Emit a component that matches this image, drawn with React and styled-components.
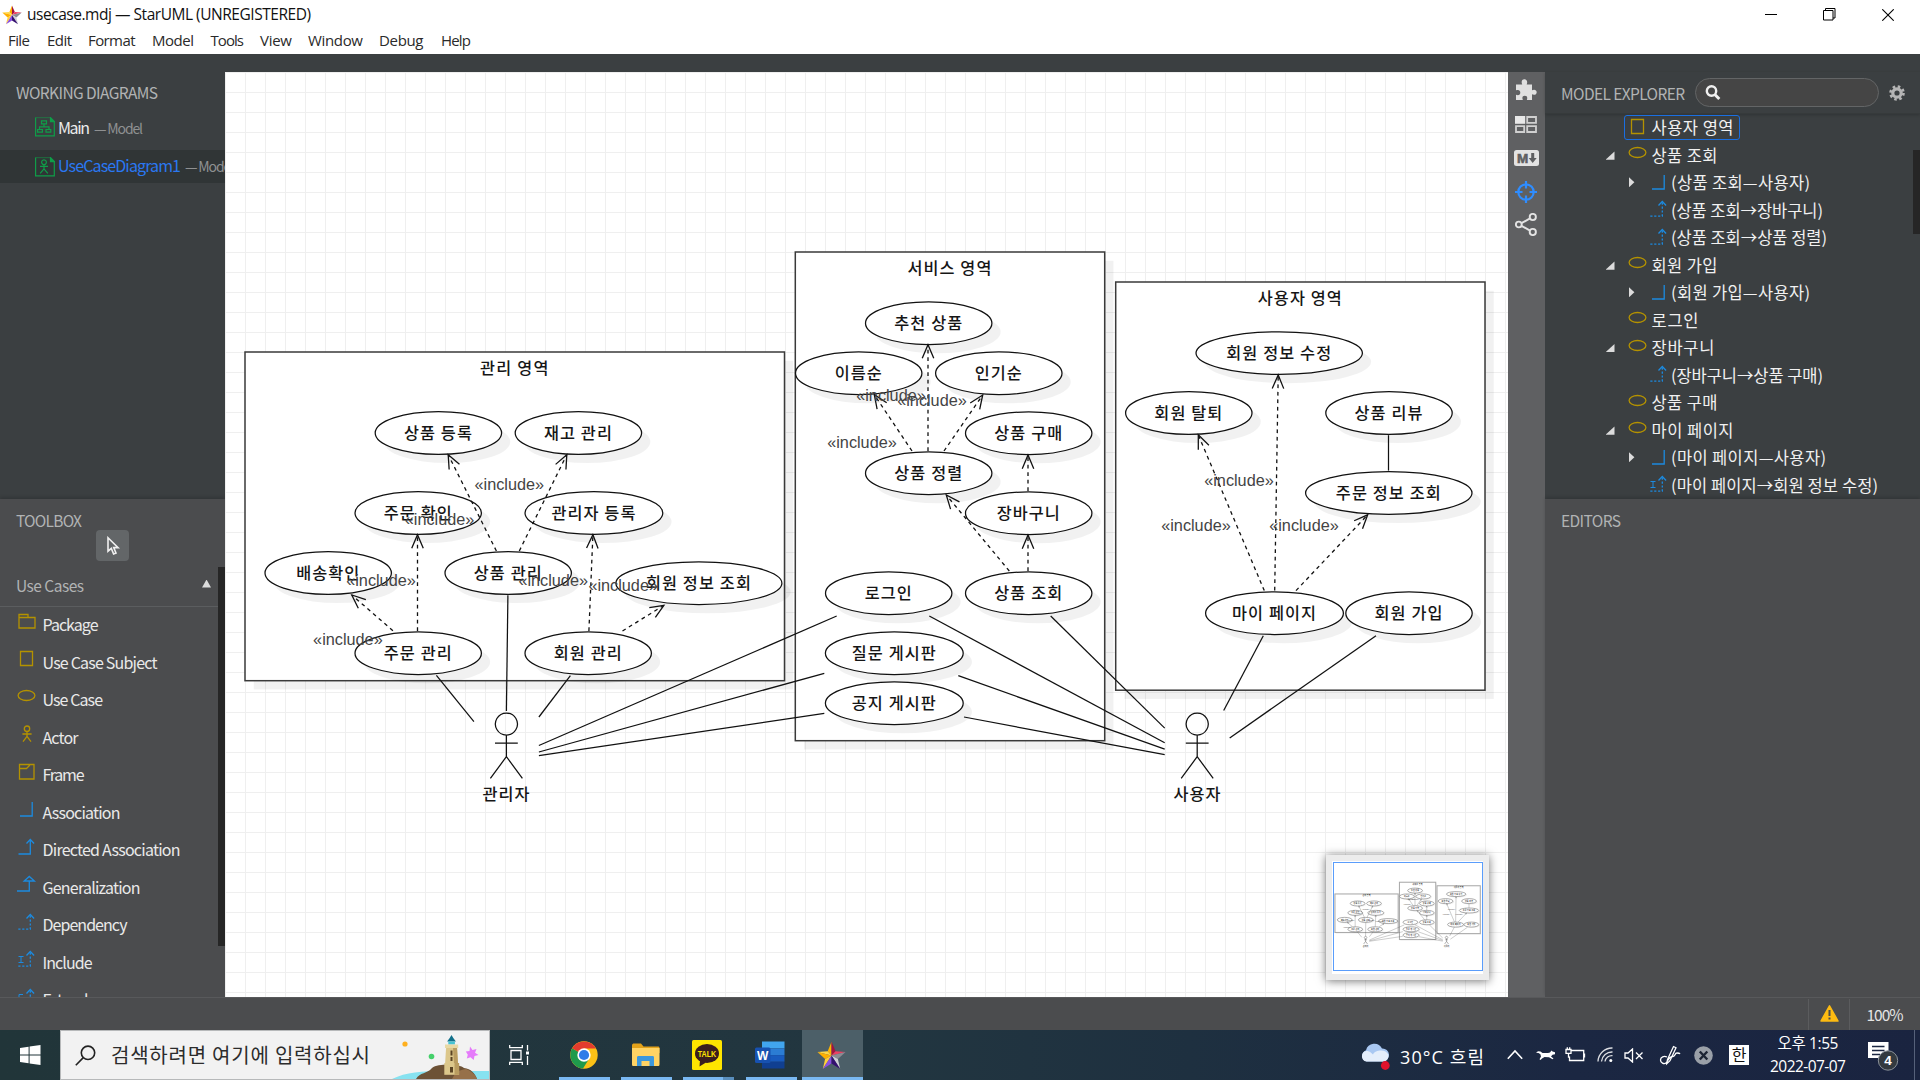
import React, { useLayoutEffect, useRef } from "react";
import styled, { createGlobalStyle, css } from "styled-components";

const KR = `"Noto Sans CJK KR", "Noto Sans", sans-serif`;
const UI = `"Open Sans", "Noto Sans CJK KR", sans-serif`;

const Global = createGlobalStyle`
  * { box-sizing: border-box; }
  html, body { margin: 0; padding: 0; overflow: hidden; }
  body { font-family: ${KR}; background: #3b3f41; }
  svg { display: block; flex: none; }
`;

/* ---------- text that keeps a fixed advance width ---------- */

const FitSpan = styled.span`
  display: inline-block;
  white-space: pre;
  flex: none;
`;

function Fit({ w, children, className }) {
  const ref = useRef(null);
  useLayoutEffect(() => {
    const el = ref.current;
    el.style.letterSpacing = "0px";
    const natural = el.getBoundingClientRect().width;
    const count = Array.from(el.textContent).length;
    const gap = (w - natural) / Math.max(1, count - 1);
    el.style.letterSpacing = `${gap}px`;
    el.style.marginRight = `${-gap}px`;
  }, [w, children]);
  return <FitSpan ref={ref} className={className}>{children}</FitSpan>;
}

/* ---------- frame ---------- */

const Screen = styled.div`
  width: 1920px;
  height: 1080px;
  display: flex;
  flex-direction: column;
  overflow: hidden;
`;

const TitleBar = styled.header`
  height: 29px;
  background: #fff;
  display: flex;
  align-items: center;
  padding-left: 2px;
  gap: 5px;
  font: 400 15.5px/29px ${UI};
  color: #111;
`;

const WindowButtons = styled.div`
  margin-left: auto;
  display: flex;
  align-items: center;
  gap: 46px;
  padding-right: 26px;
`;

const MenuBar = styled.nav`
  height: 25px;
  background: #fff;
  display: flex;
  align-items: flex-start;
  padding: 0 0 0 8px;
  font: 400 15px/23px ${UI};
  color: #2a2a2a;
`;

const MenuItem = styled.span`
  display: block;
  flex: none;
  width: ${(p) => p.$slot}px;
`;

const Strip = styled.div`
  height: 18px;
  background: #3b3f41;
`;

const Workspace = styled.div`
  display: flex;
  height: 925px;
`;

const LeftColumn = styled.aside`
  width: 225px;
  display: flex;
  flex-direction: column;
  background: #3b3f41;
  overflow: hidden;
`;

const PanelTitle = styled.div`
  font-size: 15.5px;
  line-height: 24px;
  color: #b1b3b4;
  padding-left: 16px;
`;

const Working = styled.section`
  height: 427px;
  flex: none;
  padding-top: 8px;
`;

const DiagramRow = styled.div`
  height: ${(p) => p.$h}px;
  display: flex;
  align-items: center;
  gap: 3px;
  padding: 0 0 ${(p) => (p.$active ? 3 : 0)}px 35px;
  background: ${(p) => (p.$active ? "#303536" : "transparent")};
  color: ${(p) => (p.$active ? "#2a78f2" : "#ececec")};
  font-size: 16px;
  overflow: hidden;
  line-height: 24px;
`;

const DocSlot = styled.span`
  padding-top: ${(p) => (p.$active ? 3 : 0)}px;
`;

const Owner = styled.span`
  color: #8f9192;
  font-size: 14px;
  padding-left: 1px;
  padding-top: 1px;
`;

const Toolbox = styled.section`
  flex: 1;
  min-height: 0;
  background: #4b4c4e;
  box-shadow: 0 -2px 3px rgba(0, 0, 0, 0.15);
  padding-top: 9px;
  display: flex;
  flex-direction: column;
`;

const ToolButton = styled.div`
  width: 33px;
  height: 31px;
  margin: -2px 0 4px 96px;
  padding-left: 2px;
  border-radius: 4px;
  background: #636668;
  display: flex;
  align-items: center;
  justify-content: center;
  flex: none;
`;

const ToolScroll = styled.div`
  display: flex;
  flex: 1;
  min-height: 0;
`;

const ToolList = styled.div`
  width: 218px;
  overflow: hidden;
`;

const ScrollThumb = styled.div`
  width: 7px;
  height: ${(p) => p.$h}px;
  margin-top: ${(p) => p.$top}px;
  background: #262626;
`;

const GroupHead = styled.div`
  height: 42px;
  display: flex;
  align-items: center;
  justify-content: space-between;
  padding: 0 7px 1px 16px;
  border-bottom: 1px solid #5b5d5f;
  color: #b1b3b4;
  font-size: 15.5px;
`;

const Up = styled.i`
  width: 9px;
  height: 8px;
  margin-bottom: 3px;
  background: #dcdcdc;
  clip-path: polygon(50% 0, 100% 100%, 0 100%);
`;

const ToolRow = styled.div`
  height: 37.5px;
  display: flex;
  align-items: center;
  gap: 6px;
  padding: 0 0 3px 16.5px;
  color: #e9e9e9;
  font-size: 16px;
`;

const ToolIcon = styled.span`
  width: 20px;
  height: 18px;
  margin-top: -5px;
`;

/* ---------- canvas ---------- */

const CanvasArea = styled.main`
  width: 1283px;
  position: relative;
  overflow: hidden;
  background-color: #fff;
  background-image: linear-gradient(#efefef 1px, transparent 1px),
    linear-gradient(90deg, #efefef 1px, transparent 1px);
  background-size: 20px 20px;
`;

const MiniMap = styled.div`
  position: absolute;
  left: 1101px;
  top: 783px;
  width: 163px;
  height: 125px;
  padding: 6px;
  background: #ececec;
  box-shadow: 0 1px 9px rgba(0, 0, 0, 0.55);
`;

const MiniPaper = styled.div`
  height: 113px;
  background: #fff;
  padding: 1px 0 0 1px;
`;

const MiniView = styled.div`
  height: 109px;
  border: 1.5px solid #5a9dfb;
`;

/* ---------- right side ---------- */

const IconRail = styled.div`
  width: 37px;
  background: #5f6062;
  display: flex;
  flex-direction: column;
  align-items: center;
  padding: 7px 1px 0 0;
`;

const RailSlot = styled.div`
  height: ${(p) => p.$h}px;
  display: flex;
  align-items: flex-start;
`;

const RightColumn = styled.aside`
  width: 375px;
  display: flex;
  flex-direction: column;
  background: #3b3f41;
`;

const ExplorerHead = styled.div`
  height: 42px;
  flex: none;
  display: flex;
  align-items: center;
  padding: 0 15px 0 16px;
  color: #b1b3b4;
  font-size: 15.5px;
  border-bottom: 1px solid #363a3b;
  box-shadow: 0 1px 3px rgba(0, 0, 0, 0.2);
`;

const SearchPill = styled.div`
  width: 184px;
  height: 29px;
  margin: 0 10px 0 auto;
  border: 1px solid #636566;
  border-radius: 15px;
  background: #454545;
  display: flex;
  align-items: center;
  padding-left: 9px;
`;

const TreeArea = styled.div`
  height: 385px;
  flex: none;
  display: flex;
  justify-content: space-between;
  overflow: hidden;
`;

const Tree = styled.div`
  margin-top: -0.5px;
`;

const TreeRow = styled.div`
  height: 27.5px;
  display: flex;
  align-items: center;
  padding-left: ${(p) => (p.$level === 2 ? 84 : 60.5)}px;
  color: #f1f1f1;
  font-size: 16.5px;
  line-height: 24px;
`;

const Expander = styled.i`
  width: 9px;
  height: 10px;
  margin-right: ${(p) => (p.$level === 2 ? 6.5 : 9)}px;
  background: ${(p) => (p.$state ? "#dcdcdc" : "transparent")};
  ${(p) => p.$state === "open" && css`clip-path: polygon(100% 18%, 100% 100%, 0 100%);`}
  ${(p) => p.$state === "closed" && css`clip-path: polygon(0 0, 60% 50%, 0 100%);`}
`;

const NodeBox = styled.div`
  display: flex;
  align-items: center;
  gap: ${(p) => (p.$level === 2 ? 3.5 : 5)}px;
  height: 25px;
  padding: 0 5px 0 3px;
  border: 1px solid ${(p) => (p.$selected ? "#1a6fe2" : "transparent")};
  border-radius: 3px;
`;

const NodeIcon = styled.span`
  width: 20px;
  height: 18px;
  margin-right: -1px;
  margin-top: -1px;
`;

const Editors = styled.section`
  flex: 1;
  background: #4b4c4e;
  padding-top: 9px;
  box-shadow: 0 -2px 3px rgba(0, 0, 0, 0.15);
`;

/* ---------- status bar ---------- */

const StatusBar = styled.footer`
  height: 33px;
  background: #4b4c4e;
  border-top: 1px solid #58595b;
  display: flex;
  justify-content: flex-end;
  padding-top: 1px;
`;

const StatusCell = styled.div`
  width: ${(p) => p.$w}px;
  border-left: 1px solid #5b5c5e;
  display: flex;
  align-items: center;
  justify-content: center;
  padding-bottom: 2px;
  color: #e4e4e4;
  font-size: 15.5px;
`;

/* ---------- taskbar ---------- */

const Taskbar = styled.div`
  height: 50px;
  display: flex;
  background: linear-gradient(90deg, #213539 0%, #223640 45%, #1e3040 62%, #1b2742 82%, #1a2440 100%);
`;

const StartButton = styled.div`
  width: 60px;
  display: flex;
  align-items: center;
  justify-content: center;
`;

const SearchBox = styled.div`
  width: 430px;
  height: 50px;
  border: 1px solid #b7b9ba;
  background: #f2f2f2;
  display: flex;
  align-items: center;
  padding-left: 14px;
  font: 400 20px/45px ${KR};
  color: #2c2c2c;
`;

const SearchLabel = styled.span`
  margin: -2px auto 0 15px;
`;

const TaskViewSlot = styled.div`
  width: 62px;
  display: flex;
  align-items: center;
  padding-left: 19px;
`;

const AppSlot = styled.div`
  width: ${(p) => p.$w}px;
  display: flex;
  flex-direction: column;
  align-items: center;
  background: ${(p) => (p.$active ? "#4c5f68" : "transparent")};
`;

const AppIcon = styled.div`
  flex: 1;
  display: flex;
  align-items: center;
  padding: 3px ${(p) => p.$nudge || 0}px 0 0;
`;

const AppLine = styled.div`
  height: 3px;
  width: ${(p) => p.$w}px;
  background: ${(p) => (p.$split ? "linear-gradient(90deg,#79b8f2 78%,#5a8fbd 78%)" : "#79b8f2")};
`;

const Tray = styled.div`
  width: 560px;
  margin-left: auto;
  display: flex;
  align-items: center;
  color: #fff;
`;

const TrayItem = styled.div`
  width: ${(p) => p.$w}px;
  flex: none;
  display: flex;
  padding-top: ${(p) => p.$down || 0}px;
`;

const Weather = styled.div`
  width: 107px;
  flex: none;
  font: 400 18px/26px ${UI};
  padding-top: 3px;
`;

const Clock = styled.div`
  width: 106px;
  flex: none;
  display: flex;
  flex-direction: column;
  align-items: center;
  font: 400 15.5px/23.5px ${UI};
  padding: 0 14px 0 0;
`;

/* ---------- small drawings ---------- */

const Star = ({ size }) => (
  <svg width={size} height={size} viewBox="0 0 20 20">
    <path d="M10 10 10 .5 7.4 7z" fill="#ffb400" />
    <path d="M10 .5 10 10 12.8 7z" fill="#a3123f" />
    <path d="M.3 7.6 7.4 7 10 10z" fill="#ffd84a" />
    <path d="M.3 7.6 10 10 5.6 12.4z" fill="#ffb000" />
    <path d="M19.7 7.6 12.8 7 10 10z" fill="#ef3f62" />
    <path d="M19.7 7.6 10 10 14.4 12.4z" fill="#8b8b93" />
    <path d="M4 19.3 5.6 12.4 10 10z" fill="#ffcf3a" />
    <path d="M4 19.3 10 10 10 15.6z" fill="#8a4fe0" />
    <path d="M16 19.3 14.4 12.4 10 10z" fill="#cfcfd6" />
    <path d="M16 19.3 10 10 10 15.6z" fill="#34106f" />
  </svg>
);

const Gold = "#b49200";
const Blue = "#1c8be0";

const glyphs = {
  package: <path d="M2 1.5h9v3H2zM2 4.5h16v10.5H2z" stroke={Gold} />,
  subject: <path d="M3.5 1.5h12v14h-12z" stroke={Gold} />,
  usecase: <ellipse cx="9.5" cy="7.5" rx="8.4" ry="5" stroke={Gold} />,
  actor: (
    <g stroke={Gold}>
      <circle cx="10" cy="3.7" r="2.7" />
      <path d="M10 6.4v5.2M5.4 9h9.2M10 11.4l-4 5.2M10 11.4l4 5.2" />
    </g>
  ),
  frame: <path d="M2.5 1.5H17v14.5H2.5zM2.5 5.5h7l3-3V1.5" stroke={Gold} />,
  association: <path d="M3 16h12.2V2" stroke={Blue} />,
  directed: <path d="M1.5 16H13.3V1.5M9.5 5.5l3.8-4 3.8 4" stroke={Blue} />,
  generalization: <path d="M0 16H12.3V6M7.2 6l5.1-4.6L17.4 6z" stroke={Blue} />,
  dependency: (
    <g stroke={Blue}>
      <path d="M1.3 16.2H13.3V2" strokeDasharray="2.2 1.7" />
      <path d="M9.5 5.5l3.8-4 3.8 4" />
    </g>
  ),
  include: (
    <g stroke={Blue}>
      <path d="M1.3 16.2H13.3V2" strokeDasharray="2.2 1.7" />
      <path d="M9.5 5.5l3.8-4 3.8 4" />
      <path d="M1.5 6.5h5M4 6.5v6M1.5 12.500h5" strokeWidth="1" />
    </g>
  ),
  extend: (
    <g stroke={Blue}>
      <path d="M1.3 16.2H13.3V2" strokeDasharray="2.2 1.7" />
      <path d="M9.5 5.5l3.8-4 3.8 4" />
      <path d="M6 6.500H2v6h4M2 9.500h3" strokeWidth="1" />
    </g>
  ),
};

const Glyph = ({ kind }) => (
  <svg width="20" height="18" viewBox="0 0 20 18" fill="none" strokeWidth="1.3">{glyphs[kind]}</svg>
);

const DocIcon = ({ kind }) => (
  <svg width="20" height="20" viewBox="0 0 20 20" fill="none" stroke="#0f9d48" strokeWidth="1.2">
    <path d="M.6.6V18.9H19.3V4.5" />
    <path d="M.6.6H15" strokeOpacity=".45" />
    <path d="M15.5.6v4h4zM19.3 4.5 15.5.6" fill="#0f9d48" />
    {kind === "class" ? (
      <path d="M6.5 3.8h5v3h-5zM9 6.8v3M4.5 12.4V9.8h9.5v2.6M2.6 12.5h4.8v2.6H2.6zM11 12.5h4.8v2.6H11z" />
    ) : (
      <path d="M9 2.8a2.4 2.4 0 1 0 .01 0zM9 7.6v4.2M5 9.3h8M9 11.8l-3.8 4.5M9 11.8l3.8 4.5" />
    )}
  </svg>
);

/* ---------- diagram ---------- */

const subjects = [
  { x: 245, y: 352, r: 784.5, b: 680.7, label: "관리 영역", w: 68.5, tx: 514.3, ty: 367.5 },
  { x: 795.3, y: 252, r: 1104.7, b: 740.7, label: "서비스 영역", w: 84, tx: 949.4, ty: 267.5 },
  { x: 1115.7, y: 282, r: 1485, b: 690.2, label: "사용자 영역", w: 84, tx: 1299.8, ty: 297.7 },
];

const cases = [
  ["상품 등록", 438.4, 433, 63.5, 68],
  ["재고 관리", 578.4, 433, 63.5, 68],
  ["주문 확인", 418.2, 513, 63.5, 68],
  ["관리자 등록", 593.9, 513, 69.2, 84],
  ["배송확인", 328.2, 573, 63.5, 63],
  ["상품 관리", 508.2, 573, 63.5, 68],
  ["회원 정보 조회", 698.9, 583.2, 83.3, 105],
  ["주문 관리", 418.2, 653.2, 63.5, 68],
  ["회원 관리", 588.2, 653.2, 63.5, 68],
  ["추천 상품", 928.7, 323.2, 63.5, 68],
  ["이름순", 858.7, 373.2, 63.5, 47],
  ["인기순", 998.8, 373.2, 63.5, 47],
  ["상품 구매", 1028.7, 433.2, 63.5, 68],
  ["상품 정렬", 928.7, 473.2, 63.5, 68],
  ["장바구니", 1028.7, 513.2, 63.5, 63],
  ["로그인", 888.7, 593.2, 63.5, 47],
  ["상품 조회", 1028.7, 593.2, 63.5, 68],
  ["질문 게시판", 894.3, 653.2, 69.2, 84],
  ["공지 게시판", 894.3, 703.2, 69.2, 84],
  ["회원 정보 수정", 1279.2, 353.1, 83.5, 105],
  ["회원 탈퇴", 1188.8, 413, 63.5, 68],
  ["상품 리뷰", 1389, 413, 63.5, 68],
  ["주문 정보 조회", 1388.8, 493, 83.5, 105],
  ["마이 페이지", 1274.5, 613.2, 69.2, 84],
  ["회원 가입", 1409, 613.2, 63.5, 68],
];

const dashed = [
  [496.4, 551, 448.2, 454.7],
  [519.3, 551, 566.8, 454.7],
  [417.5, 631, 417.5, 534.7],
  [392.9, 630.7, 351.8, 595],
  [588.9, 631, 592.9, 534.7],
  [622.5, 631, 663.9, 605.3],
  [912, 451, 874.3, 394.7],
  [928, 451, 928, 344.7],
  [944, 451, 982.7, 395],
  [1028, 491, 1028, 455],
  [1028, 571, 1028, 535],
  [1009.3, 571, 946.3, 495],
  [1264.3, 590.6, 1198.3, 434.9],
  [1274.7, 590.6, 1278.2, 374.9],
  [1296, 590.6, 1367.7, 514.8],
];

const solid = [
  [507.9, 595.3, 506.4, 711],
  [436.4, 675.3, 473.9, 721.7],
  [570.4, 675.7, 538.9, 717],
  [538.9, 745.5, 836.7, 616],
  [538.9, 752, 824.3, 673.3],
  [538.9, 755.7, 824.3, 713.3],
  [929.3, 616, 1164.7, 742.8],
  [1050.7, 616, 1164.7, 728.1],
  [958.3, 675.7, 1164.7, 749.1],
  [964, 717, 1164.7, 754.7],
  [1263.3, 635.8, 1223.7, 710.5],
  [1376, 635.8, 1229.7, 737.9],
  [1388.5, 435.2, 1388.5, 470.6],
];

const includes = [
  [509.3, 484.5], [439.6, 519], [381, 580.8], [553.2, 580], [623.2, 585], [347.9, 639.8],
  [891, 395.7], [932, 400.8], [862, 442.8],
  [1239, 480.6], [1196, 525.8], [1304, 525.8],
];

const actors = [
  [506.4, "관리자", 794.3],
  [1197.2, "사용자", 794.3],
];

const Name = styled.text`
  font: 500 16.3px ${KR};
  fill: #161616;
  text-anchor: middle;
`;

const Stereo = styled.text`
  font: 16.25px "Liberation Sans", sans-serif;
  fill: #444;
  text-anchor: middle;
`;

function arrowHead([x1, y1, x2, y2]) {
  const a = Math.atan2(y2 - y1, x2 - x1);
  const at = (s) => {
    const t = a + Math.PI + s * 0.4;
    return `${x2 + 14.8 * Math.cos(t)} ${y2 + 14.8 * Math.sin(t)}`;
  };
  return `M${at(1)}L${x2} ${y2}L${at(-1)}`;
}

const Drawing = ({ mini }) => (
  <svg
    width={mini ? 147 : 1283}
    height={mini ? 106 : 925}
    viewBox={mini ? "237 90 1254 900" : "225 72 1283 925"}
    fill="none"
    stroke={mini ? "#555" : "#111"}
    strokeWidth={mini ? 4 : 1.25}
  >
    {subjects.map((s) => (
      <g key={s.label}>
        <rect x={s.x + 8.75} y={s.y + 8.75} width={s.r - s.x} height={s.b - s.y} fill="#000" fillOpacity=".055" stroke="none" />
        <rect x={s.x} y={s.y} width={s.r - s.x} height={s.b - s.y} fill="#fff" stroke={mini ? "#aaa" : "#3a3a3a"} strokeWidth={mini ? 9 : 1.5} />
      </g>
    ))}
    {cases.map(([label, cx, cy, rx]) => (
      <g key={label}>
        <ellipse cx={cx + 8.75} cy={cy + 8.75} rx={rx - 0.3} ry="21.3" fill="#000" fillOpacity=".055" stroke="none" />
        <ellipse cx={cx} cy={cy} rx={rx - 0.3} ry="21.3" fill="#fff" />
      </g>
    ))}
    {dashed.map((l, i) => (
      <g key={i}>
        <line x1={l[0]} y1={l[1]} x2={l[2]} y2={l[3]} strokeDasharray={mini ? "none" : "3.75 3.75"} strokeWidth={mini ? 2.5 : 1.3} />
        <path d={arrowHead(l)} strokeWidth={mini ? 2.5 : 1.3} />
      </g>
    ))}
    {solid.map((l, i) => (
      <line key={i} x1={l[0]} y1={l[1]} x2={l[2]} y2={l[3]} strokeWidth={mini ? 2.5 : 1.25} />
    ))}
    {actors.map(([x, label]) => (
      <path
        key={label}
        d={`M${x} 713a11 11 0 1 0 .01 0zM${x} 735V756.7M${x - 11.4} 743h22.8M${x} 756.7L${x - 16} 778.3M${x} 756.7L${x + 16} 778.3`}
      />
    ))}
    <g stroke="none">
      {subjects.map((s) => (
        <Name key={s.label} x={s.tx} y={s.ty + 6} textLength={s.w}>{s.label}</Name>
      ))}
      {cases.map(([label, cx, cy, , w]) => (
        <Name key={label} x={cx - 0.5} y={cy + 5.5} textLength={w}>{label}</Name>
      ))}
      {actors.map(([x, label, y]) => (
        <Name key={label} x={x - 0.3} y={y + 6} textLength={47}>{label}</Name>
      ))}
      {includes.map(([x, y], i) => (
        <Stereo key={i} x={x} y={y + 5.5}>«include»</Stereo>
      ))}
    </g>
  </svg>
);

/* ---------- rail icons ---------- */

const Rail = () => (
  <IconRail>
    <RailSlot $h={37}>
      <svg width="22" height="22" viewBox="0 0 22 22" fill="#e0e0e0">
        <path d="M1 5.5h6.2C6 3 6.8.3 9.4.3S12.8 3 11.7 5.5H17v5.700c2.300-1.200 4.700-.3 4.700 2s-2.400 3.200-4.700 2.100V21H11.800c1-2.400.3-4.200-2-4.200S6.800 18.600 7.900 21H1v-5.200c2.600.9 4.300.1 4.300-2.300S3.500 10.300 1 11.300z" />
      </svg>
    </RailSlot>
    <RailSlot $h={34}>
      <svg width="22" height="17" viewBox="0 0 22 17">
        <path d="M0 0h10.2v7.8H0z" fill="#e8e8e8" />
        <path d="M12.2 1h8.8v5.800h-8.800zM1 10.200h8.200V16H1zM12.200 10.200h8.800V16h-8.800z" fill="#5f6062" stroke="#d0d0d0" strokeWidth="1.8" />
      </svg>
    </RailSlot>
    <RailSlot $h={31}>
      <svg width="25" height="16" viewBox="0 0 25 16">
        <rect width="25" height="16" rx="2.5" fill="#e3e3e3" />
        <text x="8.5" y="12.6" textAnchor="middle" fontFamily="Liberation Sans" fontWeight="700" fontSize="13.5" fill="#5f6062" stroke="#5f6062" strokeWidth=".6">M</text>
        <path d="M17.2 3h3v5h2.5l-4 5-4-5h2.5z" fill="#5f6062" />
      </svg>
    </RailSlot>
    <RailSlot $h={32}>
      <svg width="22" height="22" viewBox="0 0 22 22" fill="none" stroke="#2f8dff" strokeWidth="2.2">
        <circle cx="11" cy="11" r="7.7" />
        <path d="M11 0v7.5M11 14.5V22M0 11h7.5M14.5 11H22" />
      </svg>
    </RailSlot>
    <RailSlot $h={30}>
      <svg width="22" height="23" viewBox="0 0 22 23" fill="none" stroke="#e3e3e3" strokeWidth="1.9">
        <circle cx="3.8" cy="11.5" r="2.9" />
        <circle cx="17.8" cy="4" r="3.1" />
        <circle cx="17.8" cy="19" r="3.1" />
        <path d="M6.5 10.2 15 5.4M6.5 12.8 15 17.6" />
      </svg>
    </RailSlot>
  </IconRail>
);

/* ---------- data ---------- */

const menus = [
  ["File", 39, 22], ["Edit", 41, 25], ["Format", 64, 47.5], ["Model", 58.5, 42], ["Tools", 49.5, 33.5],
  ["View", 48, 32], ["Window", 71, 55], ["Debug", 62, 44.5], ["Help", 40, 30],
];

const tools = [
  ["package", "Package", 56], ["subject", "Use Case Subject", 115], ["usecase", "Use Case", 60.5],
  ["actor", "Actor", 36], ["frame", "Frame", 42], ["association", "Association", 78],
  ["directed", "Directed Association", 138], ["generalization", "Generalization", 98],
  ["dependency", "Dependency", 85], ["include", "Include", 50], ["extend", "Extend", 46],
];

const nodes = [
  [1, "", "subject", "사용자 영역", 82, true],
  [1, "open", "usecase", "상품 조회", 66],
  [2, "closed", "association", "(상품 조회—사용자)", 139],
  [2, "", "dependency", "(상품 조회→장바구니)", 152],
  [2, "", "dependency", "(상품 조회→상품 정렬)", 156],
  [1, "open", "usecase", "회원 가입", 66],
  [2, "closed", "association", "(회원 가입—사용자)", 139],
  [1, "", "usecase", "로그인", 47],
  [1, "open", "usecase", "장바구니", 63],
  [2, "", "dependency", "(장바구니→상품 구매)", 152],
  [1, "", "usecase", "상품 구매", 66],
  [1, "open", "usecase", "마이 페이지", 82],
  [2, "closed", "association", "(마이 페이지—사용자)", 155],
  [2, "", "include", "(마이 페이지→회원 정보 수정)", 207],
];

/* ---------- taskbar drawings ---------- */

const Lighthouse = () => (
  <svg width="97" height="48" viewBox="0 0 97 48">
    <path d="M0 48C14 41 30 40 52 40H97V48z" fill="#87e2f0" />
    <path d="M24 48c4-7 11-5 16-11 7-5 28-4 32 0 7 1 11 5 13 11z" fill="#6d5236" />
    <path d="M60 48c3-6 6-9 14-10 5 2 9 5 11 10z" fill="#967049" />
    <circle cx="13" cy="13" r="2.6" fill="#ffb01f" />
    <circle cx="39.5" cy="25.500" r="2.8" fill="#45d06b" />
    <path d="M78 15.500l2.500 3.500 4-1-1.500 3.800 3.500 2.200-4 1-.8 4-3.200-2.800-3.700 1.300 1-3.800-2-3.200 3.700-.5z" fill="#e57bfa" />
    <path d="M59.500 4l1.8 3 2.600 3.500H55.100l2.600-3.500z" fill="#12708a" />
    <path d="M56.300 10.500h6.600v3h-6.600z" fill="#46c3d3" />
    <path d="M53 13.500h13.200v3.500H53z" fill="#e9d9a4" />
    <path d="M54.100 17h11l1 15.500h-13z" fill="#dcc78b" />
    <path d="M61 17h4l1 15.500h-4z" fill="#b99c60" />
    <path d="M52.300 32h14.800v11.800H52.300z" fill="#dcc78b" />
    <path d="M62.500 32h4.600v11.800h-4.600z" fill="#b99c60" />
    <path d="M58.500 19.500h2v5h-2zM58.500 26h2v4h-2zM58 36h3v5.500h-3z" fill="#5a4424" />
  </svg>
);

const Chrome = () => (
  <svg width="28" height="28" viewBox="0 0 28 28">
    <circle cx="14" cy="14" r="13.7" fill="#fbc116" />
    <path d="M14 14 2.1 7.2A13.7 13.7 0 0 0 13 27.6L19.6 17z" fill="#1f9a4c" />
    <path d="M14 14 2.1 7.2A13.7 13.7 0 0 1 25.9 7.5H14z" fill="#e33b2e" />
    <circle cx="14" cy="14" r="6.7" fill="#fff" />
    <circle cx="14" cy="14" r="5.1" fill="#2f7de8" />
  </svg>
);

const Folder = () => (
  <svg width="29" height="24" viewBox="0 0 29 24">
    <path d="M1 2.5C1 1 2 .5 3 .5h7l2.5 3H27c1 0 1.5.6 1.5 1.5v5H1z" fill="#e3a21a" />
    <path d="M1 5h27.5v16.5c0 1-.6 1.500-1.500 1.500H2.500C1.500 23 1 22.500 1 21.500z" fill="#ffd364" />
    <path d="M6 23v-8.500c0-1 .6-1.500 1.500-1.500h14c1 0 1.500.5 1.500 1.500V23h-4.500v-5H10.500v5z" fill="#3c97dc" />
  </svg>
);

const Kakao = () => (
  <svg width="30" height="30" viewBox="0 0 30 30">
    <rect width="30" height="30" rx="1.5" fill="#ffe500" />
    <ellipse cx="15" cy="13.5" rx="12" ry="9.500" fill="#3b1e1e" />
    <path d="M8 20l-.5 6.500 6.500-4z" fill="#3b1e1e" />
    <text x="15" y="16.6" textAnchor="middle" fontFamily="Liberation Sans" fontWeight="700" fontSize="8.5" textLength="18.500" lengthAdjust="spacingAndGlyphs" fill="#ffe500">TALK</text>
  </svg>
);

const Word = () => (
  <svg width="30" height="28" viewBox="0 0 30 28">
    <path d="M7 .5h22.500V7.300H7z" fill="#41a5ee" />
    <path d="M7 7.300h22.500v6.800H7z" fill="#2b7cd3" />
    <path d="M7 14.100h22.500v6.700H7z" fill="#185abd" />
    <path d="M7 20.800h22.500v6.700H7z" fill="#103f91" />
    <rect x="0" y="6.5" width="15.5" height="15.500" rx="1.5" fill="#1751b0" />
    <text x="7.7" y="18.600" textAnchor="middle" fontFamily="Liberation Sans" fontWeight="700" fontSize="12" fill="#fff">W</text>
  </svg>
);

const Cloud = () => (
  <svg width="31" height="30" viewBox="0 0 31 30">
    <path d="M6.500 19.500A6 6 0 0 1 6 8.200 8.600 8.600 0 0 1 22 6.500a6.500 6.500 0 0 1 1 13z" fill="#a9c8f2" />
    <path d="M6.500 19.500a5.300 5.300 0 0 1 0-10.500c4 0 5 2.500 6.500 3.500 2-4.500 13-6 15.500.5 0 4-2 6.500-5.500 6.500z" fill="#e4eefb" />
    <circle cx="25.300" cy="23.500" r="4.4" fill="#e0122c" />
  </svg>
);

const thin = { fill: "none", stroke: "#fff", strokeWidth: 1.3 };

const SystemTray = () => (
  <Tray>
    <TrayItem $w={40} $down={3}><Cloud /></TrayItem>
    <Weather><Fit w={84}>30°C 흐림</Fit></Weather>
    <TrayItem $w={29}><svg width="16" height="12" viewBox="0 0 16 12" {...thin} strokeWidth="1.6"><path d="M.8 9.800 8 2l7.200 7.800" /></svg></TrayItem>
    <TrayItem $w={29}>
      <svg width="20" height="10" viewBox="0 0 20 10" fill="#fff"><path d="M0 2.800 2 1.200 4.500 1.500 6.500 3H12l2-.6L15.500.6l1 1 2.500.6v2l-2.500.5L15 6.500l2.500 2-1 .8L13 7.200 8.500 7 6 8.500 4.500 10l-1-.8L5 6.600 4.400 4.200 2.500 3z" /></svg>
    </TrayItem>
    <TrayItem $w={32}>
      <svg width="21" height="16" viewBox="0 0 21 16" {...thin}><path d="M6.500 3.500h12.200v10H4.500V9.500M19.500 6.500v4M1 2.500h5v3.800H1zM2.300 2.500V.3M4.700 2.500V.3M3.500 6.300V10h1" /></svg>
    </TrayItem>
    <TrayItem $w={27}>
      <svg width="17" height="16" viewBox="0 0 17 16" {...thin}><path d="M1 14.500A14 14 0 0 1 15.500 1M4.500 14.500A10.500 10.500 0 0 1 15.500 5M8 14.500A7 7 0 0 1 15.500 8.600" strokeOpacity=".85" /><circle cx="13.800" cy="13.600" r="1.5" fill="#fff" stroke="none" /></svg>
    </TrayItem>
    <TrayItem $w={35}>
      <svg width="20" height="15" viewBox="0 0 20 15" {...thin}><path d="M1 5h3l4.500-4v13L4 10H1zM12 4.500l6.500 6.500M18.500 4.500 12 11" /></svg>
    </TrayItem>
    <TrayItem $w={35}>
      <svg width="22" height="21" viewBox="0 0 22 21" {...thin}><path d="M8.500 14.500 14.500 1.500l2.500 1.200-6 13-3.200 3zM8 12c-3-1.500-6.500 0-6.500 3s3.500 4.500 5.500 3 2-6.500 7-6.500c2.500 0 1.500-3.500 4-3.500s3 1 3 1" /></svg>
    </TrayItem>
    <TrayItem $w={35}>
      <svg width="19" height="19" viewBox="0 0 19 19"><circle cx="9.500" cy="9.500" r="9.3" fill="#9aa0a8" /><path d="M5.800 5.500l7.500 8M13.300 5.500l-7.500 8" stroke="#1c2433" strokeWidth="2.4" /></svg>
    </TrayItem>
    <TrayItem $w={33}>
      <svg width="20" height="20" viewBox="0 0 20 20"><rect width="20" height="20" fill="#fff" /><text x="10" y="15.800" textAnchor="middle" fontFamily="Noto Sans CJK KR" fontSize="16" fill="#111">한</text></svg>
    </TrayItem>
    <Clock>
      <Fit w={61}>오후 1:55</Fit>
      <Fit w={76}>2022-07-07</Fit>
    </Clock>
    <TrayItem $w={46}>
      <svg width="32" height="32" viewBox="0 0 32 32">
        <path d="M0 3h20.500v16H14l-4 4v-4H0z" fill="#fff" />
        <path d="M4 7.500h12.500M4 11.500h12.500M4 15.500h8" stroke="#1b2742" strokeWidth="1.3" />
        <circle cx="20" cy="21.500" r="9.7" fill="#333a40" stroke="#8a9199" strokeWidth="1" />
        <text x="20" y="26.300" textAnchor="middle" fontFamily="Liberation Sans" fontWeight="700" fontSize="13.5" fill="#fff">4</text>
      </svg>
    </TrayItem>
    <svg width="1" height="50" viewBox="0 0 1 50"><path d="M0 0h1v50H0z" fill="#56617a" /></svg>
  </Tray>
);

/* ---------- app ---------- */

export default function App() {
  return (
    <Screen>
      <Global />
      <TitleBar>
        <Star size={20} />
        <Fit w={284}>usecase.mdj — StarUML (UNREGISTERED)</Fit>
        <WindowButtons>
          <svg width="12" height="14" viewBox="0 0 12 14"><path d="M0 6h12v1H0z" fill="#000" /></svg>
          <svg width="13" height="13" viewBox="0 0 13 13" fill="none" stroke="#000"><path d="M.5 2.500h9.500v9.500H.5zM2.500 2.500V.5H12v9.500h-2" /></svg>
          <svg width="12" height="12" viewBox="0 0 12 12" stroke="#000" strokeWidth="1.1"><path d="M.3.3l11.400 11.400M11.700.3.3 11.700" /></svg>
        </WindowButtons>
      </TitleBar>
      <MenuBar>
        {menus.map(([label, slot, w]) => (
          <MenuItem key={label} $slot={slot}><Fit w={w}>{label}</Fit></MenuItem>
        ))}
      </MenuBar>
      <Strip />
      <Workspace>
        <LeftColumn>
          <Working>
            <PanelTitle><Fit w={142}>WORKING DIAGRAMS</Fit></PanelTitle>
            <DiagramRow $h={46}>
              <DocSlot><DocIcon kind="class" /></DocSlot><Fit w={32}>Main</Fit><Owner><Fit w={49}>— Model</Fit></Owner>
            </DiagramRow>
            <DiagramRow $h={33} $active>
              <DocSlot $active><DocIcon kind="usecase" /></DocSlot><Fit w={123}>UseCaseDiagram1</Fit><Owner><Fit w={49}>— Model</Fit></Owner>
            </DiagramRow>
          </Working>
          <Toolbox>
            <PanelTitle><Fit w={66}>TOOLBOX</Fit></PanelTitle>
            <ToolButton>
              <svg width="15" height="20" viewBox="0 0 15 20" fill="none" stroke="#f0f0f0" strokeWidth="1.6"><path d="M2 1.800v13.400l3.300-2.800 2.300 5.600 2.400-1-2.300-5.400h4.400z" /></svg>
            </ToolButton>
            <ToolScroll>
              <ToolList>
                <GroupHead><Fit w={68}>Use Cases</Fit><Up /></GroupHead>
                {tools.map(([kind, label, w]) => (
                  <ToolRow key={label}>
                    <ToolIcon><Glyph kind={kind} /></ToolIcon>
                    <Fit w={w}>{label}</Fit>
                  </ToolRow>
                ))}
              </ToolList>
              <ScrollThumb $h={379} $top={2} />
            </ToolScroll>
          </Toolbox>
        </LeftColumn>
        <CanvasArea>
          <Drawing />
          <MiniMap>
            <MiniPaper>
              <MiniView><Drawing mini /></MiniView>
            </MiniPaper>
          </MiniMap>
        </CanvasArea>
        <Rail />
        <RightColumn>
          <ExplorerHead>
            <Fit w={124}>MODEL EXPLORER</Fit>
            <SearchPill>
              <svg width="16" height="16" viewBox="0 0 16 16" fill="none" stroke="#efefef" strokeWidth="2.4"><circle cx="6.500" cy="6" r="4.7" /><path d="M9.800 9.500l4.500 4.500" strokeWidth="3" /></svg>
            </SearchPill>
            <svg width="16" height="16" viewBox="-8 -8 16 16" fill="none" stroke="#b5b5b5">
              <circle r="4.2" strokeWidth="3.2" />
              <circle r="6.5" strokeWidth="2.6" strokeDasharray="2.55 2.55" />
            </svg>
          </ExplorerHead>
          <TreeArea>
            <Tree>
              {nodes.map(([level, state, kind, label, w, selected]) => (
                <TreeRow key={label} $level={level}>
                  <Expander $level={level} $state={state} />
                  <NodeBox $level={level} $selected={selected}>
                    <NodeIcon><Glyph kind={kind} /></NodeIcon>
                    <Fit w={w}>{label}</Fit>
                  </NodeBox>
                </TreeRow>
              ))}
            </Tree>
            <ScrollThumb $h={84} $top={36} />
          </TreeArea>
          <Editors>
            <PanelTitle><Fit w={60}>EDITORS</Fit></PanelTitle>
          </Editors>
        </RightColumn>
      </Workspace>
      <StatusBar>
        <StatusCell $w={41}>
          <svg width="19" height="17" viewBox="0 0 19 17"><path d="M9.500.8 18 16H1z" fill="#fdbb12" stroke="#fdbb12" strokeWidth="1.5" strokeLinejoin="round" /><path d="M8.500 5h2v6h-2zM8.500 12.500h2v2h-2z" fill="#4b4c4e" /></svg>
        </StatusCell>
        <StatusCell $w={71}><Fit w={37}>100%</Fit></StatusCell>
      </StatusBar>
      <Taskbar>
        <StartButton>
          <svg width="21" height="20" viewBox="0 0 21 20" fill="#fff"><path d="M0 3 8.600 1.800V9.500H0zM9.600 1.600 20.500 0v9.500H9.600zM0 10.500h8.600v7.700L0 17zM9.600 10.500h10.900V20L9.600 18.400z" /></svg>
        </StartButton>
        <SearchBox>
          <svg width="21" height="21" viewBox="0 0 21 21" fill="none" stroke="#222" strokeWidth="1.6"><circle cx="13" cy="7.800" r="6.7" /><path d="M8.300 12.600.8 20.200" /></svg>
          <SearchLabel><Fit w={259}>검색하려면 여기에 입력하십시</Fit></SearchLabel>
          <Lighthouse />
        </SearchBox>
        <TaskViewSlot>
          <svg width="21" height="20" viewBox="0 0 21 20" fill="none" stroke="#fff" strokeWidth="1.3"><path d="M2 5.500h10v9H2zM.7 0v2.700H13.300V0M.7 20v-2.700H13.300V20M18.500 0v5.500M18.500 11v9" /><path d="M17 6.500h3v3h-3z" fill="#fff" stroke="none" /></svg>
        </TaskViewSlot>
        <AppSlot $w={64}><AppIcon><Chrome /></AppIcon><AppLine $w={51} /></AppSlot>
        <AppSlot $w={61}><AppIcon $nudge={2}><Folder /></AppIcon><AppLine $w={51} /></AppSlot>
        <AppSlot $w={63}><AppIcon $nudge={3}><Kakao /></AppIcon><AppLine $w={51} $split /></AppSlot>
        <AppSlot $w={62}><AppIcon $nudge={3}><Word /></AppIcon><AppLine $w={51} /></AppSlot>
        <AppSlot $w={61} $active><AppIcon $nudge={2}><Star size={29} /></AppIcon><AppLine $w={61} /></AppSlot>
        <SystemTray />
      </Taskbar>
    </Screen>
  );
}
